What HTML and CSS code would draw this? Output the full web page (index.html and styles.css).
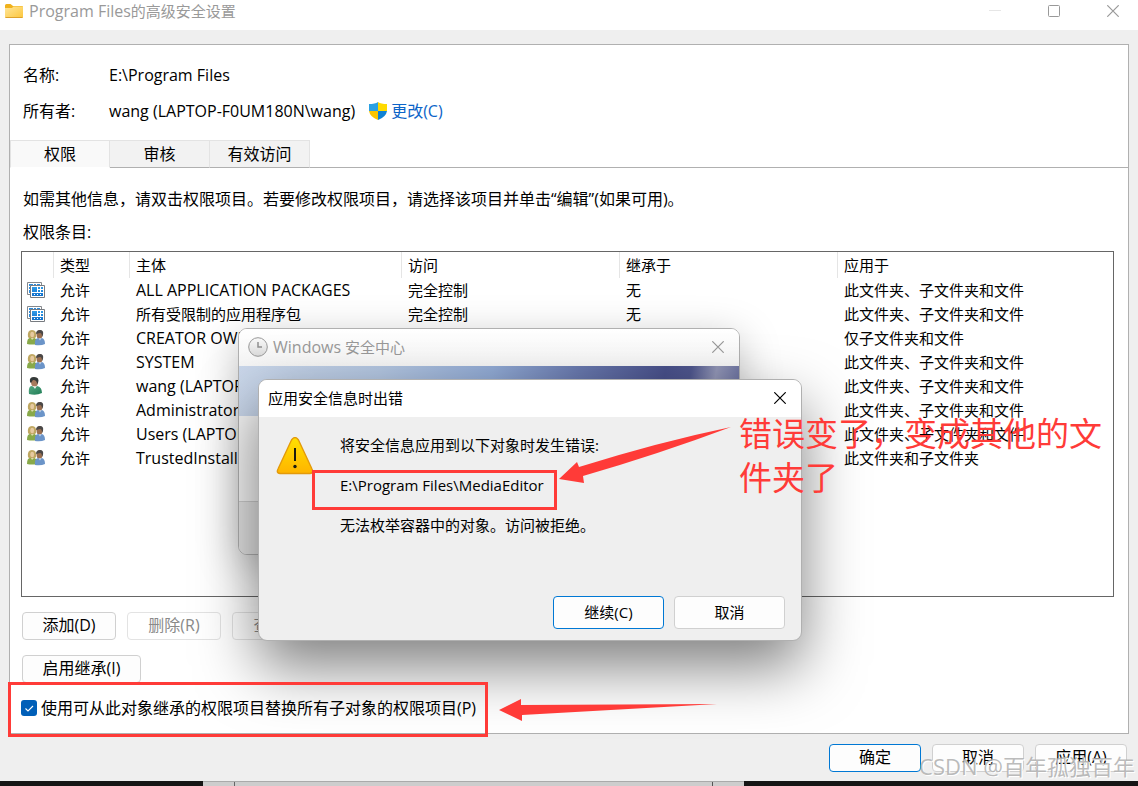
FILE: index.html
```html
<!DOCTYPE html>
<html lang="zh-CN">
<head>
<meta charset="utf-8">
<title>Program Files的高级安全设置</title>
<link rel="stylesheet" href="styles.css">
</head>
<body>
<svg class="defs" width="0" height="0" aria-hidden="true">
  <defs>
    <linearGradient id="folder" x1="0" y1="0" x2="1" y2="1"><stop offset="0" stop-color="#ffe69a"/><stop offset="1" stop-color="#fcc63c"/></linearGradient>
    <linearGradient id="tile" x1="0" y1="0" x2="0" y2="1"><stop offset="0" stop-color="#2f9be8"/><stop offset="1" stop-color="#0f6fcb"/></linearGradient>
    <linearGradient id="warn" x1="0" y1="0" x2="0" y2="1"><stop offset="0" stop-color="#ffe100"/><stop offset="1" stop-color="#ffb400"/></linearGradient>
    <linearGradient id="clock" x1="0" y1="0" x2="0" y2="1"><stop offset="0" stop-color="#fafafa"/><stop offset="1" stop-color="#dadada"/></linearGradient>
    <linearGradient id="green" x1="0" y1="0" x2="1" y2="1"><stop offset="0" stop-color="#55a882"/><stop offset="1" stop-color="#1f7d56"/></linearGradient>
    <symbol id="i-app" viewBox="0 0 18 16">
      <path d="M.5.5h14v12H.5z" fill="#fff" stroke="#85888c"/>
      <path d="M2 2h4v2H2zM7 2h2v1H7zM10 2h3v1h-3zM2 5h1v2H2zM2 8h1v3H2z" fill="#2b8bdc"/>
      <path d="M3.500 3.500h14v12h-14z" fill="#fff" stroke="#777b80"/>
      <path d="M5 5h5v5H5zM11 5h2v2h-2zM14 5h2v2h-2zM11 8h2v2h-2zM14 8h2v2h-2zM5 11h11v3H5z" fill="url(#tile)"/>
      <path d="M7 12h1v1H7zM10 12h1v1h-1zM13 12h1v1h-1z" fill="#fff"/>
    </symbol>
    <symbol id="i-group" viewBox="0 0 18 16">
      <path d="M1 7Q0 0 5 0q5 0 4 7L7 9H3z" fill="#bfa761"/>
      <ellipse cx="5.200" cy="4.500" rx="1.900" ry="2.800" fill="#e6c9a0"/>
      <path d="M0 14Q0 8 3 8l2 1 2-1q3 0 3 6-5 1-10 0z" fill="#88a949"/>
      <path d="M4 8l1 2 2-2z" fill="#dcdcae"/>
      <ellipse cx="12.500" cy="4.500" rx="3" ry="4.200" fill="#9a6f50"/>
      <path d="M9 4q0-4 4-4t3 5l-1 2q0-4-2-4z" fill="#4b4847"/>
      <path d="M8 15q-1-6 3-7l2 1 2-1q3 1 3 6-4 2-10 1z" fill="#6b94c8"/>
      <path d="M12 8.500l1 2 1-2z" fill="#dbe7f4"/>
    </symbol>
    <symbol id="i-user" viewBox="0 0 18 18">
      <ellipse cx="7.500" cy="5" rx="3.500" ry="4.500" fill="#a77a5c"/>
      <path d="M3 5Q2 0 7 0q6 0 4 6L10 7q0-4-4-4L4 6z" fill="#353b3a"/>
      <path d="M2 17Q1 9 5 9l3 2 2-2q5 1 5 7-6 3-13 1z" fill="url(#green)"/>
      <path d="M6 9l2 3 1-2z" fill="#e7efe8"/>
    </symbol>
    <symbol id="i-close" viewBox="0 0 12 12"><path d="M.3.3l11.400 11.400M11.700.3L.3 11.700" fill="none" stroke="currentColor" stroke-width="1.200"/></symbol>
  </defs>
</svg>

<main class="window">
  <header class="titlebar">
    <svg class="folder" viewBox="0 0 18 14" aria-hidden="true"><path d="M0 1.500Q0 0 1.500 0h4L8 2h9q1 0 1 1v9H0z" fill="#f0b21c"/><path d="M0 4h7l1.500-1.500H18V13q0 1-1 1H1q-1 0-1-1z" fill="url(#folder)"/><path d="M.5 13.500h17" stroke="#dda12b"/></svg>
    <h1 class="title"><span class="latin">Program Files</span>的高级安全设置</h1>
    <div class="controls">
      <button class="ctl ctl-min" aria-label="最小化" disabled><svg viewBox="0 0 12 12"><path d="M0 5.500h12" stroke="currentColor"/></svg></button>
      <button class="ctl" aria-label="最大化"><svg viewBox="0 0 12 12"><rect x=".5" y=".5" width="11" height="11" rx="1" fill="none" stroke="currentColor"/></svg></button>
      <button class="ctl" aria-label="关闭"><svg><use href="#i-close"/></svg></button>
    </div>
  </header>

  <section class="panel">
    <dl class="facts">
      <div class="fact"><dt>名称:</dt><dd>E:\Program Files</dd></div>
      <div class="fact"><dt>所有者:</dt><dd>wang (LAPTOP-F0UM180N\wang)</dd>
        <dd class="change"><svg class="shield" viewBox="0 0 18 18" aria-hidden="true"><path d="M9 0Q6 2 0 2v7h9z" fill="#2ba1e3"/><path d="M9 0q3 2 9 2v7H9z" fill="#ffda00"/><path d="M0 9q1 6 9 9V9z" fill="#fbc500"/><path d="M18 9q-1 6-9 9V9z" fill="#0f82d4"/></svg><a href="#">更改(C)</a></dd>
      </div>
    </dl>
    <div class="tabs" role="tablist">
      <button class="tab active" role="tab" aria-selected="true">权限</button>
      <button class="tab" role="tab">审核</button>
      <button class="tab" role="tab">有效访问</button>
    </div>
    <div class="page">
      <p class="hint">如需其他信息，请双击权限项目。若要修改权限项目，请选择该项目并单击“编辑”(如果可用)。</p>
      <p class="caption">权限条目:</p>
      <div class="list">
        <table class="entries">
          <colgroup><col class="c-icon"><col class="c-type"><col class="c-who"><col class="c-mid"><col class="c-mid"><col></colgroup>
          <thead><tr><th></th><th>类型</th><th>主体</th><th>访问</th><th>继承于</th><th>应用于</th></tr></thead>
          <tbody>
            <tr><td><svg class="ico"><use href="#i-app"/></svg></td><td>允许</td><td class="latin">ALL APPLICATION PACKAGES</td><td>完全控制</td><td>无</td><td>此文件夹、子文件夹和文件</td></tr>
            <tr><td><svg class="ico"><use href="#i-app"/></svg></td><td>允许</td><td>所有受限制的应用程序包</td><td>完全控制</td><td>无</td><td>此文件夹、子文件夹和文件</td></tr>
            <tr><td><svg class="ico"><use href="#i-group"/></svg></td><td>允许</td><td class="latin">CREATOR OWNER</td><td></td><td></td><td>仅子文件夹和文件</td></tr>
            <tr><td><svg class="ico"><use href="#i-group"/></svg></td><td>允许</td><td class="latin">SYSTEM</td><td></td><td></td><td>此文件夹、子文件夹和文件</td></tr>
            <tr><td><svg class="ico"><use href="#i-user"/></svg></td><td>允许</td><td class="latin">wang (LAPTOP</td><td></td><td></td><td>此文件夹、子文件夹和文件</td></tr>
            <tr><td><svg class="ico"><use href="#i-group"/></svg></td><td>允许</td><td class="latin">Administrators</td><td></td><td></td><td>此文件夹、子文件夹和文件</td></tr>
            <tr><td><svg class="ico"><use href="#i-group"/></svg></td><td>允许</td><td class="latin">Users (LAPTOP</td><td></td><td></td><td>此文件夹、子文件夹和文件</td></tr>
            <tr><td><svg class="ico"><use href="#i-group"/></svg></td><td>允许</td><td class="latin">TrustedInstaller</td><td></td><td></td><td>此文件夹和子文件夹</td></tr>
          </tbody>
        </table>
      </div>
      <div class="row">
        <button class="btn">添加(D)</button>
        <button class="btn" disabled>删除(R)</button>
        <button class="btn" disabled>查看(V)</button>
      </div>
      <div class="row"><button class="btn wide">启用继承(I)</button></div>
      <div class="check">
        <span class="tick"><input type="checkbox" id="replace" checked><svg viewBox="0 0 16 16" aria-hidden="true"><path d="M4.500 8.500l2.500 2.500 5-5" fill="none" stroke="#fff" stroke-width="1.100"/></svg></span>
        <label for="replace">使用可从此对象继承的权限项目替换所有子对象的权限项目(P)</label>
      </div>
    </div>
  </section>

  <footer class="footer">
    <button class="btn primary">确定</button>
    <button class="btn">取消</button>
    <button class="btn">应用(A)</button>
  </footer>
</main>

<div class="desktop" aria-hidden="true">
  <span class="dark left"></span><span class="light"></span><span class="dark right"></span>
</div>

<section class="dialog security" aria-label="Windows 安全中心">
  <header class="dlg-title">
    <svg class="clock" viewBox="0 0 20 20" aria-hidden="true"><circle cx="10" cy="10" r="9.300" fill="url(#clock)" stroke="#999"/><path d="M10 5v5h4" fill="none" stroke="#909090" stroke-width="1.500"/></svg>
    <h2><span class="latin">Windows</span> 安全中心</h2>
    <button class="ctl" aria-label="关闭"><svg><use href="#i-close"/></svg></button>
  </header>
  <div class="banner"></div>
  <div class="dlg-space"></div>
  <div class="dlg-foot"></div>
</section>

<section class="dialog error" role="alertdialog" aria-labelledby="err-title">
  <header class="dlg-title">
    <h2 id="err-title">应用安全信息时出错</h2>
    <button class="ctl" aria-label="关闭"><svg><use href="#i-close"/></svg></button>
  </header>
  <div class="message">
    <svg class="warn" viewBox="0 0 38 38" aria-hidden="true"><path d="M15.500 3q3.500-5 7 0L36 32q2 4-2 4.500H4Q0 36 2 32z" fill="url(#warn)" stroke="#e39a0a" stroke-width="1.400"/><path d="M19 11v13" stroke="#1c1c10" stroke-width="2"/><circle cx="19" cy="29.500" r="1.700" fill="#1c1c10"/></svg>
    <div class="lines">
      <p>将安全信息应用到以下对象时发生错误:</p>
      <p>E:\Program Files\MediaEditor</p>
      <p>无法枚举容器中的对象。访问被拒绝。</p>
    </div>
  </div>
  <div class="actions">
    <button class="btn primary">继续(C)</button>
    <button class="btn">取消</button>
  </div>
</section>

<div class="mark mark-path"></div>
<div class="mark mark-check"></div>
<svg class="arrow arrow-path" viewBox="0 0 172 57" aria-hidden="true"><path d="M0 52L18 35l2 5Q100 15 172 0 100 27 24 49l1 7z" fill="#ff3b38"/></svg>
<svg class="arrow arrow-check" viewBox="0 0 218 22" aria-hidden="true"><path d="M0 11L22 0v6l196-1L23 16v6z" fill="#ff3b38"/></svg>
<p class="note">错误变了，变成其他的文件夹了</p>
<p class="watermark">CSDN @百年孤独百年</p>
</body>
</html>
```
FILE: styles.css
```css
* { box-sizing: border-box; }

body {
  position: relative;
  display: flex;
  flex-direction: column;
  min-height: 100vh;
  margin: 0;
  overflow: hidden;
  background: #efefef;
  color: #000;
  font-family: "Open Sans", "Noto Sans CJK SC", sans-serif;
  font-size: 15px;
  line-height: 24px;
}

h1, h2, p, dl, dd { margin: 0; font-size: 15px; font-weight: 400; }
button { font: inherit; color: inherit; }
svg { display: block; }
.defs { position: absolute; }
.latin { font-size: 16px; }

.window { display: flex; flex: 1; flex-direction: column; background: #efefef; }

.titlebar {
  display: flex;
  align-items: center;
  height: 30px;
  padding: 0 5px 8px;
  background: #fff;
  color: #999;
}
.folder { width: 18px; height: 14px; margin-right: 6px; }
.title { flex: 1; }
.controls { display: flex; gap: 19px; }
.ctl {
  display: grid;
  place-items: center;
  width: 40px;
  height: 22px;
  padding: 0;
  border: 0;
  background: none;
  color: inherit;
}
.ctl svg { width: 12px; height: 12px; }
.ctl-min { color: #e6e6e6; }

.panel {
  display: flex;
  flex: 1;
  flex-direction: column;
  margin: 14px 9px 0;
  border: 1px solid #b0b0b0;
  background: #fff;
}
.facts { padding: 18px 13px 17px; }
.fact { display: flex; height: 24px; }
.fact + .fact { margin-top: 12px; }
.fact dt, .fact dd { font-size: 16px; }
.fact dt { width: 86px; }
.change { display: flex; align-items: center; gap: 4px; margin-left: 14px; }
.change a { color: #0c64c8; text-decoration: none; }
.shield { width: 18px; height: 18px; }

.tabs { display: flex; }
.tabs::after { content: ""; flex: 1; border-bottom: 1px solid #b0b0b0; }
.tab {
  width: 100px;
  height: 28px;
  padding: 0;
  border: 1px solid #e3e3e3;
  border-bottom-color: #b0b0b0;
  border-left-width: 0;
  background: #f2f2f2;
  font-size: 16px;
}
.tab.active { border-left-width: 1px; border-bottom-color: #fff; background: #f9f9f9; }

.page { display: flex; flex: 1; flex-direction: column; padding: 19px 14px 0 11px; }
.hint, .caption { padding-left: 2px; font-size: 16px; }
.caption { margin: 9px 0 7px; }

.list { flex: 1; min-height: 240px; border: 1px solid #666; }
.entries { width: 100%; border-spacing: 0; table-layout: fixed; }
.c-icon { width: 32px; }
.c-type { width: 76px; }
.c-who { width: 272px; }
.c-mid { width: 218px; }
.entries th, .entries td { height: 24px; padding: 0 0 0 6px; text-align: left; font-weight: 400; white-space: nowrap; }
.entries th { height: 26px; border-right: 1px solid #e5e5e5; }
.entries th:last-child { border-right: 0; }
.entries td:first-child { padding-left: 5px; }
.ico { width: 18px; height: 18px; }

.row { display: flex; gap: 11px; margin-top: 15px; padding-left: 1px; }
.btn {
  width: 94px;
  height: 28px;
  padding: 0 0 2px;
  border: 1px solid #d0d0d0;
  border-radius: 4px;
  background: #fdfdfd;
}
.row .btn { font-size: 16px; }
.btn:disabled { border-color: #e3e3e3; color: #8a8a8a; background: transparent; }
.btn.wide { width: 119px; }
.btn.primary { border-color: #0078d4; }

.check { display: flex; align-items: center; gap: 4px; height: 24px; margin: 13px 0; font-size: 16px; }
.tick { position: relative; width: 16px; height: 16px; }
.tick input { display: block; width: 16px; height: 16px; margin: 0; border-radius: 3px; background: #005fb8; appearance: none; }
.tick svg { position: absolute; inset: 0; pointer-events: none; }

.footer { display: flex; justify-content: flex-end; gap: 11px; padding: 10px 11px 9px; }
.footer .btn { width: 92px; font-size: 16px; }

.desktop { display: flex; height: 5px; background: #cdcdcd; }
.dark { background: #151515; }
.dark.left { width: 203px; }
.light { width: 541px; border-top: 1px solid #aaa; background: linear-gradient(90deg, #cdcdcd 31px, #666 31px, #666 32px, #cdcdcd 32px, #cdcdcd 509px, #555 509px, #555 510px, #cdcdcd 510px); }
.dark.right { flex: 1; }

.dialog { position: absolute; display: flex; flex-direction: column; overflow: hidden; border: 1px solid #b0b0b0; border-radius: 9px; }
.dlg-title { display: flex; align-items: center; height: 37px; padding: 0 1px 2px 9px; background: #fff; }
.dlg-title h2 { flex: 1; }

.security { top: 328px; left: 238px; width: 502px; height: 227px; background: #fff; box-shadow: 0 10px 40px rgba(0, 0, 0, .25); color: #999; }
.security .dlg-title { background: linear-gradient(#fff, #f5f5f5); }
.clock { width: 20px; height: 20px; margin-right: 5px; }
.banner { height: 50px; background: linear-gradient(100deg, #cad7ea, #b3c6e1 28%, #91aad4 50%, #6878ad 67%, #48508a 84%, #4e568d 89%, #9296b6 94%, #656c9d); }
.dlg-space { flex: 1; background: #f5f5f5; }
.dlg-foot { height: 53px; border-top: 1px solid #ccc; background: #e4e4e4; }

.error { top: 379px; left: 258px; width: 544px; height: 262px; background: #efefef; box-shadow: 0 26px 60px rgba(0, 0, 0, .5); }
.message { display: flex; flex: 1; gap: 26px; padding: 16px 17px 0; }
.warn { width: 38px; height: 38px; margin-top: 4px; }
.lines { display: flex; flex-direction: column; gap: 16px; }
.actions { display: flex; justify-content: flex-end; gap: 10px; padding: 0 16px 11px; }
.actions .btn { width: 111px; height: 33px; }

.mark { position: absolute; border: 3px solid #ff3b38; }
.mark-path { top: 470px; left: 312px; width: 245px; height: 40px; }
.mark-check { top: 682px; left: 8px; width: 480px; height: 55px; }
.arrow { position: absolute; }
.arrow-path { top: 427px; left: 559px; width: 172px; height: 57px; }
.arrow-check { top: 699px; left: 499px; width: 218px; height: 22px; }
.note { position: absolute; top: 412px; left: 739px; width: 370px; color: #ff3b38; font-size: 33px; line-height: 44px; }
.watermark { position: absolute; right: 3px; bottom: 4px; color: rgba(175, 175, 175, .85); font-size: 22px; line-height: 32px; text-shadow: 1px 1px 0 #fff; white-space: nowrap; }
```
